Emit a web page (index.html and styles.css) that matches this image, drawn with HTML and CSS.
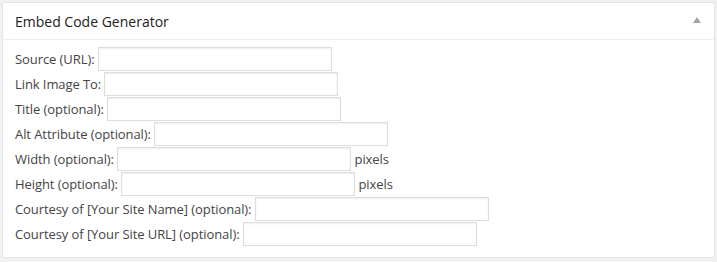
FILE: index.html
```html
<!DOCTYPE html>
<html lang="en">

<head>
    <meta charset="UTF-8">
    <title>Embed Code Generator</title>
    <link rel="stylesheet" href="styles.css">
</head>

<body>
<div class="postbox">
    <div class="hndle">
        <h3>Embed Code Generator</h3>
        <span class="toggle">
            <svg width="8" height="6" viewBox="0 0 8 6"><polygon points="4,0 8,6 0,6" fill="#a0a5aa"/></svg>
        </span>
    </div>
    <div class="inside">
        <div class="row">
            <label for="src">Source (URL):</label> <input type="text" id="src">
        </div>
        <div class="row">
            <label for="link">Link Image To:</label> <input type="text" id="link">
        </div>
        <div class="row">
            <label for="title">Title (optional):</label> <input type="text" id="title">
        </div>
        <div class="row">
            <label for="alt">Alt Attribute (optional):</label> <input type="text" id="alt">
        </div>
        <div class="row">
            <label for="width">Width (optional):</label> <input type="text" id="width"> pixels
        </div>
        <div class="row">
            <label for="height">Height (optional):</label> <input type="text" id="height"> pixels
        </div>
        <div class="row">
            <label for="sitename">Courtesy of [Your Site Name] (optional):</label> <input type="text" id="sitename">
        </div>
        <div class="row">
            <label for="siteurl">Courtesy of [Your Site URL] (optional):</label> <input type="text" id="siteurl">
        </div>
    </div>
</div>
</body>

</html>
```

FILE: styles.css
```css
html,
body {
    margin: 0;
    background: #f1f1f1;
    font-family: "Open Sans", "Liberation Sans", sans-serif;
    font-size: 13px;
    color: #444;
}

.postbox {
    margin: 2px 2px 0 2px;
    background: #fff;
    border: 1px solid #e5e5e5;
    box-shadow: 0 1px 1px rgba(0, 0, 0, .04);
}

.hndle {
    display: flex;
    align-items: center;
    justify-content: space-between;
    height: 36px;
    padding: 0 13px 0 12px;
    border-bottom: 1px solid #eee;
}

.hndle h3 {
    margin: 0;
    font-size: 14px;
    font-weight: 400;
    color: #222;
    line-height: 19px;
}

.toggle {
    display: flex;
    margin-top: -2px;
}

.inside {
    padding: 7px 12px 10px;
}

.row {
    height: 25px;
    line-height: 24px;
    letter-spacing: -0.08px;
}

input {
    box-sizing: border-box;
    width: 234px;
    height: 24px;
    margin: 0;
    padding: 3px 5px;
    border: 1px solid #ddd;
    box-shadow: inset 0 1px 2px rgba(0, 0, 0, .07);
    font-family: inherit;
    font-size: 13px;
    color: #333;
    outline: 0;
    vertical-align: top;
}
```
